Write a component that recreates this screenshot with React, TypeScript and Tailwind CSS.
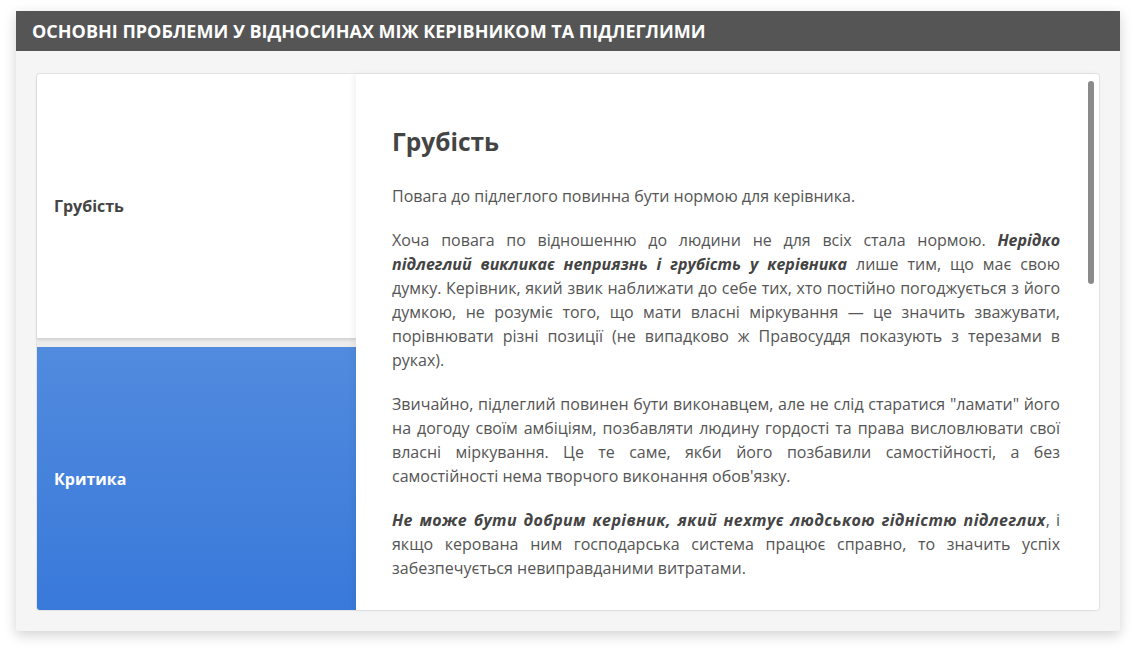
const FONT = { fontFamily: '"Open Sans", "Noto Sans", sans-serif' };

export default function App() {
  return (
    <div className="min-h-screen bg-white pt-[11px] pl-4 pr-4" style={FONT}>
      <div className="w-[1104px] bg-[#f5f5f5] shadow-[0_4px_12px_rgba(0,0,0,0.18)]">
        <div className="flex h-10 items-center bg-[#555555] px-4">
          <h1 className="text-[18px] font-bold uppercase text-white">
            Основні проблеми у відносинах між керівником та підлеглими
          </h1>
        </div>

        <div className="px-5 pt-[22px] pb-5">
          <div className="flex h-[538px] rounded-[3px] border border-[#e4e4e4] bg-[#ececec]">
            {/* tabs */}
            <div className="flex w-[319px] shrink-0 flex-col gap-[9px]">
              <button className="flex h-[264px] items-center rounded-tl-[3px] bg-white pl-[17px] text-left text-[16px] font-bold text-[#444] shadow-[0_2px_3px_rgba(0,0,0,0.12)]">
                Грубість
              </button>
              <button className="flex flex-1 items-center rounded-bl-[3px] bg-gradient-to-b from-[#518bde] to-[#3979da] pl-[17px] text-left text-[16px] font-bold text-white">
                Критика
              </button>
            </div>

            {/* content */}
            <div className="relative flex-1 overflow-hidden rounded-r-[3px] bg-white shadow-[-3px_0_6px_rgba(0,0,0,0.05)]">
              <div className="pl-9 pr-[39px] pt-[50px] text-[16px] leading-6 text-[#555]">
                <h2 className="mb-6 text-[24.5px] font-bold leading-9 text-[#444]">Грубість</h2>
                <p className="mb-5 text-justify">
                  Повага до підлеглого повинна бути нормою для керівника.
                </p>
                <p className="mb-5 text-justify">
                  Хоча повага по відношенню до людини не для всіх стала нормою.{" "}
                  <b className="italic text-[#444]">
                    Нерідко підлеглий викликає неприязнь і грубість у керівника
                  </b>{" "}
                  лише тим, що має свою думку. Керівник, який звик наближати до себе тих, хто постійно
                  погоджується з його думкою, не розуміє того, що мати власні міркування — це значить
                  зважувати, порівнювати різні позиції (не випадково ж Правосуддя показують з терезами
                  в руках).
                </p>
                <p className="mb-5 text-justify">
                  Звичайно, підлеглий повинен бути виконавцем, але не слід старатися "ламати" його на
                  догоду своїм амбіціям, позбавляти людину гордості та права висловлювати свої власні
                  міркування. Це те саме, якби його позбавили самостійності, а без самостійності нема
                  творчого виконання обов'язку.
                </p>
                <p className="mb-5 text-justify">
                  <b className="italic tracking-[0.4px] text-[#444]">
                    Не може бути добрим керівник, який нехтує людською гідністю підлеглих
                  </b>
                  , і якщо керована ним господарська система працює справно, то значить успіх
                  забезпечується невиправданими витратами.
                </p>
              </div>
              <div className="absolute right-[5px] top-[7px] h-[203px] w-[6px] rounded-full bg-[#8a8a8a]" />
            </div>
          </div>
        </div>
      </div>
    </div>
  );
}
